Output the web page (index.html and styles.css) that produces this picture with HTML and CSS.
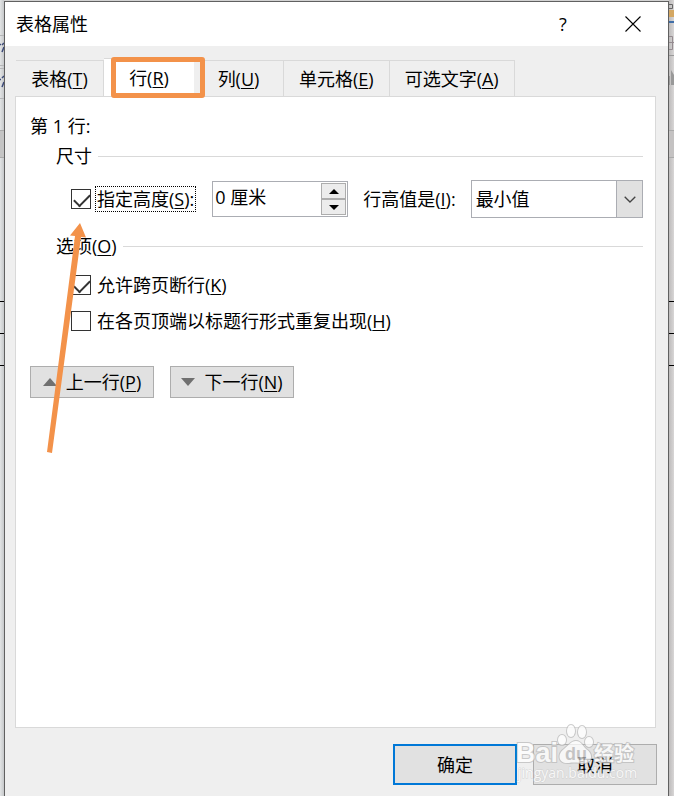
FILE: index.html
```html
<!DOCTYPE html>
<html lang="zh-CN">

<head>
    <meta charset="UTF-8">
    <meta name="viewport" content="width=device-width, initial-scale=1.0">
    <title>表格属性</title>

    <link rel="stylesheet" href="styles.css">
</head>

<body>
    <!-- document window behind the dialog, left edge -->
    <svg class="backdrop" width="4" height="796" aria-hidden="true">
        <path d="M0 35.5H4M0 65.5H4M0 68.5H4M0 98.5H4" stroke="#b5b6b8" />
        <rect y="130" width="4" height="27" fill="#c4c4c4" />
        <path d="M0 130.5H4M0 157.5H4" stroke="#aaa" />
        <path d="M0 44.500H1M2 52L4 47M2 45L4 43M0 79.500H1M2 87L4 82M2 78L4 76" stroke="#3c4a78" stroke-width="1.500" />
        <path d="M0 301.500H4M0 333.500H4M0 365.500H4" stroke="#000" />
    </svg>

    <form class="dialog" id="tableProps">
        <div class="titlebar">
            <h1>表格属性</h1>
            <button type="button" class="title-btn" aria-label="帮助">?</button>
            <button type="button" class="title-btn" aria-label="关闭">
                <svg width="16" height="16" viewBox="0 0 16 16">
                    <path d="M.5.5l15 15M15.500.5l-15 15" stroke="#000" stroke-width="1.100" />
                </svg>
            </button>
        </div>

        <div class="tabs" role="tablist">
            <button type="button" class="tab" role="tab">表格(<u>T</u>)</button>
            <button type="button" class="tab active" role="tab" aria-selected="true">行(<u>R</u>)<span class="highlight"></span></button>
            <button type="button" class="tab" role="tab">列(<u>U</u>)</button>
            <button type="button" class="tab" role="tab">单元格(<u>E</u>)</button>
            <button type="button" class="tab" role="tab">可选文字(<u>A</u>)</button>
        </div>

        <div class="panel" role="tabpanel">
            <p class="row-name">第 1 行:</p>

            <h2 class="group-title">尺寸</h2>
            <div class="size-row">
                <input type="checkbox" id="setHeight" checked>
                <label for="setHeight" class="focused">指定高度(<u>S</u>):</label>
                <div class="spinner">
                    <input type="text" value="0 厘米" aria-label="高度">
                    <div class="spin-btns">
                        <button type="button" aria-label="增加">
                            <svg width="10" height="5" viewBox="0 0 10 5"><path d="M0 5L5 0l5 5z" /></svg>
                        </button>
                        <button type="button" aria-label="减少">
                            <svg width="10" height="5" viewBox="0 0 10 5"><path d="M0 0h10L5 5z" /></svg>
                        </button>
                    </div>
                </div>
                <label for="heightRule" class="rule-label">行高值是(<u>I</u>):</label>
                <div class="dropdown">
                    <select id="heightRule">
                        <option>最小值</option>
                        <option>固定值</option>
                    </select>
                    <span class="drop-arrow">
                        <svg width="12" height="7" viewBox="0 0 12 7">
                            <path d="M.7.7L6 6 11.300.7" fill="none" stroke="#444" stroke-width="1.300" />
                        </svg>
                    </span>
                </div>
            </div>

            <h2 class="group-title">选项(<u>O</u>)</h2>
            <div class="options">
                <div class="option">
                    <input type="checkbox" id="breakPages" checked>
                    <label for="breakPages">允许跨页断行(<u>K</u>)</label>
                </div>
                <div class="option">
                    <input type="checkbox" id="repeatHeader">
                    <label for="repeatHeader">在各页顶端以标题行形式重复出现(<u>H</u>)</label>
                </div>
            </div>

            <div class="row-nav">
                <button type="button">
                    <svg width="14" height="8" viewBox="0 0 14 8"><path d="M0 8L7 0l7 8z" fill="#707070" /></svg>
                    上一行(<u>P</u>)
                </button>
                <button type="button">
                    <svg width="14" height="8" viewBox="0 0 14 8"><path d="M0 0h14L7 8z" fill="#707070" /></svg>
                    下一行(<u>N</u>)
                </button>
            </div>

            <!-- pointer to the height checkbox -->
            <svg class="arrow" width="46" height="232" viewBox="0 0 46 232" aria-hidden="true">
                <path d="M36 0L42 14.500L37 14L8 230L3 229L31 13L26 12.500z" fill="#f3924a" />
            </svg>
        </div>

        <div class="footer">
            <button type="submit" class="ok">确定</button>
            <button type="button">取消</button>

            <svg class="watermark" width="124" height="64" viewBox="0 0 124 64" aria-hidden="true">
                <g class="wm-shape">
                    <text x="1" y="38" class="wm-name">Bai</text>
                    <ellipse cx="47" cy="16" rx="4" ry="5" />
                    <ellipse cx="56" cy="7" rx="4" ry="6" />
                    <ellipse cx="67" cy="8" rx="4" ry="6" />
                    <ellipse cx="74" cy="18" rx="4" ry="5" />
                    <path d="M61 17c5 0 7 5 10 8 8 5 6 14-2 14-4 0-11-1-15 0-11 1-12-9-5-14 4-3 7-8 12-8z" />
                    <text x="79" y="37" class="wm-cjk">经验</text>
                </g>
                <text x="50" y="36" class="wm-du">du</text>
                <text x="3" y="54" class="wm-url">jingyan.baidu.com</text>
            </svg>
        </div>
    </form>

    <!-- document window behind the dialog, right edge -->
    <svg class="backdrop right" width="5" height="796" aria-hidden="true">
        <rect y="10" width="5" height="7" fill="#d4a762" />
        <path d="M0 4.500H3.500V8.500H0" fill="none" stroke="#666" />
        <path d="M0 22H5" stroke="#3f6ea8" stroke-width="2" />
        <path d="M0 36.500H3.500V49.500H0M0 42.500H5" fill="none" stroke="#958b90" />
        <path d="M0 55.500H5" stroke="#999" />
        <path d="M2 85V70l3 5v10zM0 76h1v9H0z" fill="#999" />
        <rect y="130" width="5" height="27" fill="#c4c2c2" />
        <path d="M0 130.500H5M0 157.500H5" stroke="#aaa" />
        <path d="M0 301.500H5M0 333.500H5M0 365.500H5" stroke="#000" />
    </svg>
</body>

</html>
```
FILE: styles.css
```css
* {
    box-sizing: border-box;
}

body {
    display: grid;
    grid-template-columns: 4px 1fr 5px;
    height: 100vh;
    margin: 0;
    overflow: hidden;
    background-color: #d2d2d2;
    color: #000;
}

body,
button,
input,
select {
    font-family: "Open Sans", "Noto Sans CJK SC", sans-serif;
    font-size: 18px;
    line-height: 24px;
}

h1,
h2,
p {
    margin: 0;
    font-size: 18px;
    font-weight: normal;
}

u {
    text-decoration-thickness: 1px;
    text-underline-offset: 2px;
}

button {
    padding: 0;
    border: 1px solid #adadad;
    background-color: #e1e1e1;
    color: #000;
}

.backdrop {
    display: block;
    background: linear-gradient(to right, #e2e4e5, #c6c8ca);
}

.backdrop.right {
    background: linear-gradient(to right, #bdbbbb, #d8d6d6);
}

.dialog {
    display: flex;
    flex-direction: column;
    height: calc(100vh - 1px);
    padding-bottom: 11px;
    border: 1px solid #606060;
    border-bottom: none;
    margin-top: 1px;
    background-color: #efefef;
}

.titlebar {
    display: flex;
    align-items: center;
    height: 44px;
    padding-left: 11px;
    background-color: #fff;
}

.titlebar h1 {
    flex: 1;
}

.title-btn {
    display: flex;
    align-items: center;
    justify-content: center;
    width: 70px;
    height: 44px;
    border: none;
    background: none;
}

/* tabs */
.tabs {
    display: flex;
    align-items: flex-end;
    padding: 12px 12px 0 11px;
}

.tab {
    min-width: 90px;
    height: 36px;
    padding: 0 15px;
    border: 1px solid #d9d9d9;
    border-width: 1px 1px 0 0;
    background-color: #efefef;
    white-space: nowrap;
}

.tab.active {
    position: relative;
    height: 39px;
    border-right: none;
    margin-bottom: -1px;
    background-color: #fff;
}

.tab:first-child {
    min-width: 88px;
}

.highlight {
    position: absolute;
    top: -2px;
    left: 7px;
    width: 94px;
    height: 41px;
    border: 5px solid #f3924a;
    border-radius: 3px;
    z-index: 1;
}

/* row page */
.panel {
    flex: 1;
    position: relative;
    padding: 17px 12px 0 14px;
    border: 1px solid #d9d9d9;
    margin: 0 12px 0 10px;
    background-color: #fff;
}

.group-title {
    display: flex;
    align-items: center;
    margin: 6px 0 12px 26px;
}

.group-title::after {
    content: "";
    flex: 1;
    height: 1px;
    margin-left: 6px;
    background-color: #d9d9d9;
}

input[type=checkbox] {
    appearance: none;
    width: 20px;
    height: 20px;
    border: 1px solid #333;
    margin: 0;
    background-color: #fff;
    flex: none;
}

input[type=checkbox]:checked::after {
    content: "";
    display: block;
    width: 14px;
    height: 7px;
    border: solid #333;
    border-width: 0 0 2px 2px;
    margin: 4px 2px;
    transform: rotate(-45deg);
}

.size-row {
    display: flex;
    align-items: center;
    height: 38px;
    margin: 0 0 16px 41px;
    white-space: nowrap;
}

.focused {
    padding: 0 1px;
    border: 1px dotted #000;
    margin: 0 16px 0 4px;
}

.spinner {
    display: flex;
    width: 136px;
    height: 36px;
    border: 1px solid #abadb3;
}

.spinner input {
    flex: 1;
    min-width: 0;
    padding: 0 0 4px 2px;
    border: none;
    background: none;
}

.spin-btns {
    display: flex;
    flex-direction: column;
    width: 26px;
    padding: 1px 1px 1px 0;
}

.spin-btns button {
    flex: 1;
    display: flex;
    align-items: center;
    justify-content: center;
    background-color: #ececec;
}

.rule-label {
    margin: 0 15px;
}

.dropdown {
    flex: 1;
    position: relative;
    height: 38px;
}

.dropdown select {
    appearance: none;
    width: 100%;
    height: 100%;
    padding: 0 30px 0 4px;
    border: 1px solid #abadb3;
    border-radius: 0;
    background-color: #fff;
    color: #000;
}

.drop-arrow {
    position: absolute;
    top: 0;
    right: 0;
    display: flex;
    align-items: center;
    justify-content: center;
    width: 27px;
    height: 100%;
    border: 1px solid #abadb3;
    background-color: #e1e1e1;
    pointer-events: none;
}

.options {
    display: flex;
    flex-direction: column;
    gap: 12px;
    margin: 15px 0 33px 41px;
}

.option {
    display: flex;
    align-items: center;
    gap: 6px;
}

.row-nav {
    display: flex;
    gap: 16px;
}

.row-nav button {
    display: flex;
    align-items: center;
    justify-content: center;
    width: 124px;
    height: 32px;
    white-space: nowrap;
}

.row-nav svg {
    margin-right: 9px;
}

.arrow {
    position: absolute;
    top: 126px;
    left: 28px;
}

/* footer */
.footer {
    position: relative;
    display: flex;
    justify-content: flex-end;
    gap: 16px;
    padding: 16px 11px 0 0;
}

.footer button {
    width: 124px;
    height: 41px;
}

.footer .ok {
    border: 2px solid #0078d7;
}

.watermark {
    position: absolute;
    top: -4px;
    right: 29px;
    opacity: 0.75;
    pointer-events: none;
}

.wm-shape {
    fill: #fff;
    stroke: #bbb;
    stroke-width: 2px;
    paint-order: stroke;
}

.wm-name {
    font: bold 27px "Liberation Sans", sans-serif;
}

.wm-cjk {
    font: bold 20px "Noto Sans CJK SC", sans-serif;
}

.wm-du {
    font: bold 18px "Liberation Sans", sans-serif;
    fill: #bbb;
}

.wm-url {
    font: 14px "Open Sans", sans-serif;
    fill: #fff;
    stroke: #ccc;
    stroke-width: 1px;
    paint-order: stroke;
}
```
